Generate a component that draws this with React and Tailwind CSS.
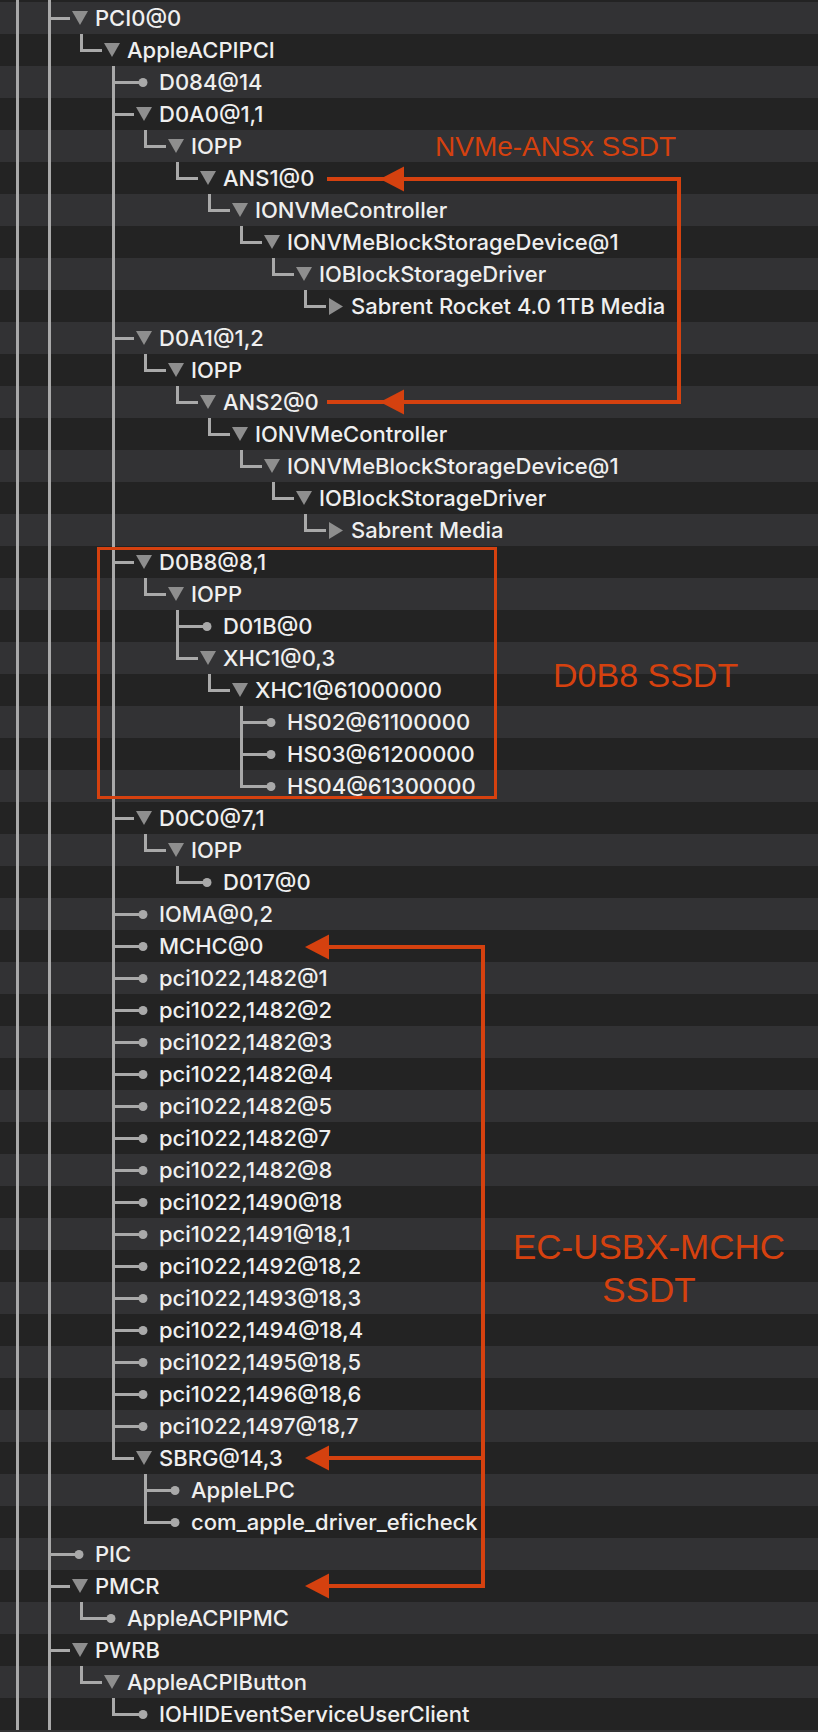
const pci = (id, fn) => [2, `pci1022,${id}@${fn}`, 'dot'];

// [level, label, kind] — kind is down (expanded), right (collapsed) or dot (leaf)
const nodes = [
  [0, 'PCI0@0', 'down'],
  [1, 'AppleACPIPCI', 'down'],
  [2, 'D084@14', 'dot'],
  [2, 'D0A0@1,1', 'down'],
  [3, 'IOPP', 'down'],
  [4, 'ANS1@0', 'down'],
  [5, 'IONVMeController', 'down'],
  [6, 'IONVMeBlockStorageDevice@1', 'down'],
  [7, 'IOBlockStorageDriver', 'down'],
  [8, 'Sabrent Rocket 4.0 1TB Media', 'right'],
  [2, 'D0A1@1,2', 'down'],
  [3, 'IOPP', 'down'],
  [4, 'ANS2@0', 'down'],
  [5, 'IONVMeController', 'down'],
  [6, 'IONVMeBlockStorageDevice@1', 'down'],
  [7, 'IOBlockStorageDriver', 'down'],
  [8, 'Sabrent Media', 'right'],
  [2, 'D0B8@8,1', 'down'],
  [3, 'IOPP', 'down'],
  [4, 'D01B@0', 'dot'],
  [4, 'XHC1@0,3', 'down'],
  [5, 'XHC1@61000000', 'down'],
  [6, 'HS02@61100000', 'dot'],
  [6, 'HS03@61200000', 'dot'],
  [6, 'HS04@61300000', 'dot'],
  [2, 'D0C0@7,1', 'down'],
  [3, 'IOPP', 'down'],
  [4, 'D017@0', 'dot'],
  [2, 'IOMA@0,2', 'dot'],
  [2, 'MCHC@0', 'dot'],
  pci('1482', '1'),
  pci('1482', '2'),
  pci('1482', '3'),
  pci('1482', '4'),
  pci('1482', '5'),
  pci('1482', '7'),
  pci('1482', '8'),
  pci('1490', '18'),
  pci('1491', '18,1'),
  pci('1492', '18,2'),
  pci('1493', '18,3'),
  pci('1494', '18,4'),
  pci('1495', '18,5'),
  pci('1496', '18,6'),
  pci('1497', '18,7'),
  [2, 'SBRG@14,3', 'down'],
  [3, 'AppleLPC', 'dot'],
  [3, 'com_apple_driver_eficheck', 'dot'],
  [0, 'PIC', 'dot'],
  [0, 'PMCR', 'down'],
  [1, 'AppleACPIPMC', 'dot'],
  [0, 'PWRB', 'down'],
  [1, 'AppleACPIButton', 'down'],
  [2, 'IOHIDEventServiceUserClient', 'dot'],
];

// does another node at level k follow before the tree climbs above k?
// levels -1 and 0 carry on past the bottom of the screenshot
const hasLaterAt = (i, k) => {
  for (let j = i + 1; j < nodes.length; j++) {
    if (nodes[j][0] < k) return false;
    if (nodes[j][0] === k) return true;
  }
  return k <= 0;
};

const LINE = '#a9a9a9';
const ARROW = '#d5410f';
const branchX = (level) => 49 + 32 * level;

function Guides({ index, level, kind }) {
  const width = 95 + 32 * level;
  const bx = branchX(level);
  const last = !hasLaterAt(index, level);
  const ancestors = [];
  for (let k = -1; k < level; k++) {
    if (hasLaterAt(index, k)) ancestors.push(k);
  }

  return (
    <svg width={width} height="32" className="shrink-0">
      {ancestors.map((k) => (
        <rect key={k} x={branchX(k) - 1} y="0" width="3" height="32" fill={LINE} />
      ))}
      <rect x={bx - 1} y="0" width="3" height={last ? 18 : 32} fill={LINE} />
      <rect x={bx - 1} y="15" width={kind === 'dot' ? 31 : 22} height="3" fill={LINE} />
      {kind === 'dot' && <circle cx={bx + 30} cy="16.5" r="4.5" fill={LINE} />}
      {kind === 'down' && (
        <polygon points={`${bx + 23},9 ${bx + 39},9 ${bx + 31},23`} fill="#8e8e8e" />
      )}
      {kind === 'right' && (
        <polygon points={`${bx + 24},8 ${bx + 38},16.5 ${bx + 24},25`} fill="#8e8e8e" />
      )}
    </svg>
  );
}

function Arrowhead({ y }) {
  return <polygon points={`305,${y} 329,${y - 12.5} 329,${y + 12.5}`} fill={ARROW} />;
}

export default function App() {
  return (
    <div className="relative w-[818px] h-[1732px] overflow-hidden bg-[#323234] font-[Inter,sans-serif] text-[22px] font-medium text-[#efefef]">
      {/* sliver of the row above */}
      <svg width="818" height="2" className="block bg-[#232323]">
        <rect x="16" y="0" width="3" height="2" fill={LINE} />
        <rect x="48" y="0" width="3" height="2" fill={LINE} />
      </svg>

      {nodes.map(([level, label, kind], i) => (
        <div
          key={i}
          className={`flex items-center h-[32px] ${i % 2 === 0 ? 'bg-[#323234]' : 'bg-[#232323]'}`}
        >
          <Guides index={i} level={level} kind={kind} />
          <span className="whitespace-nowrap leading-none">{label}</span>
        </div>
      ))}

      {/* annotations drawn over the tree */}
      <svg width="818" height="1732" className="absolute inset-0 pointer-events-none">
        {/* NVMe-ANSx bracket */}
        <path d="M327 179 H679 V402 H327" fill="none" stroke={ARROW} strokeWidth="4" />
        <polygon points={`380,179 404,166.5 404,191.5`} fill={ARROW} />
        <polygon points={`380,402 404,389.5 404,414.5`} fill={ARROW} />

        {/* D0B8 box */}
        <rect x="98.5" y="548.5" width="397" height="249" fill="none" stroke={ARROW} strokeWidth="3" />

        {/* EC-USBX-MCHC bracket */}
        <path d="M327 947 H483 V1586 H327 M483 1458 H327" fill="none" stroke={ARROW} strokeWidth="4" />
        <Arrowhead y={947} />
        <Arrowhead y={1458} />
        <Arrowhead y={1586} />
      </svg>

      <div className="absolute left-[435px] top-[133px] leading-none text-[28px] font-normal text-[#d5410f] font-['Liberation_Sans',sans-serif] whitespace-nowrap">
        NVMe-ANSx SSDT
      </div>
      <div className="absolute left-[553px] top-[658px] leading-none text-[34px] font-normal text-[#d5410f] font-['Liberation_Sans',sans-serif] whitespace-nowrap">
        D0B8 SSDT
      </div>
      <div className="absolute left-[499px] top-[1225px] w-[300px] text-center leading-[43px] text-[35px] font-normal text-[#d5410f] font-['Liberation_Sans',sans-serif]">
        EC-USBX-MCHC
        <br />
        SSDT
      </div>
    </div>
  );
}
